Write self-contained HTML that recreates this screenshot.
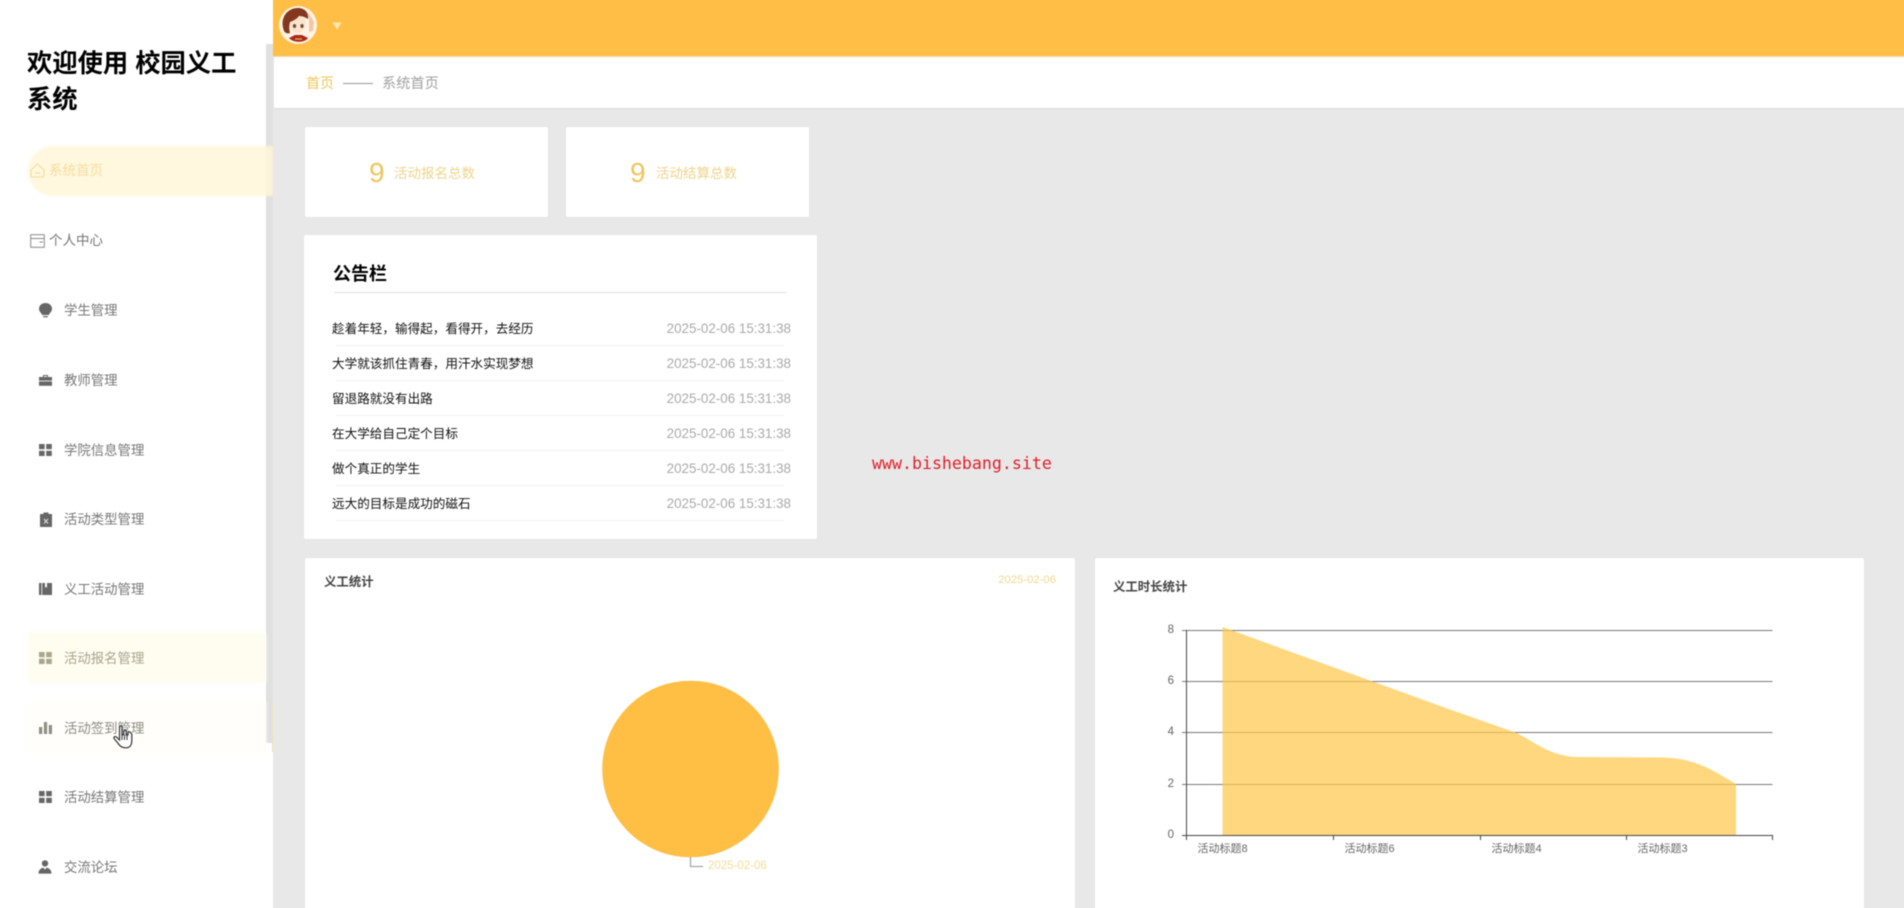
<!DOCTYPE html>
<html lang="zh-CN"><head><meta charset="utf-8"><title>校园义工系统</title>
<style>
html,body{margin:0;padding:0;width:1904px;height:908px;overflow:hidden;background:#e8e8e8}
body{font-family:"Liberation Sans","Noto Sans CJK SC",sans-serif;position:relative}
#w{position:absolute;left:-6px;top:-6px;width:1916px;height:920px;overflow:hidden;filter:blur(.4px);background:#e8e8e8}
#v{position:absolute;left:6px;top:6px;width:1904px;height:908px}
.a,.t,svg.i{position:absolute}
.t{white-space:nowrap;height:24px;line-height:24px}
.m{font-size:13.4px;color:#777;left:64px;margin-top:.5px}
.row{left:332px;font-size:12.6px;color:#111;margin-top:.5px}
.dt{left:665px;font-size:13.4px;color:#aaa;width:126px;text-align:right;margin-top:.5px}
.dv{position:absolute;left:336px;width:448px;height:1px;background:#f2f2f2}
.card{position:absolute;background:#fff;border-radius:2px;box-shadow:0 0 2px rgba(0,0,0,.03)}
</style></head><body><div id="w"><div id="v">

<!-- sidebar -->
<div class="a" style="left:-6px;top:-6px;width:279px;height:920px;background:#fff"></div>
<div class="a" style="left:266px;top:44px;width:6.5px;height:699px;background:#e0e0e0"></div>
<div class="a" style="left:28px;top:146px;width:245px;height:50px;background:rgba(255,246,216,.85);border-radius:25px 0 0 25px;filter:blur(1px)"></div>
<div class="a" style="left:28px;top:633px;width:238px;height:50px;background:#fffcf0;filter:blur(1.5px)"></div>
<div class="a" style="left:28px;top:702px;width:238px;height:50px;background:#fffefa;filter:blur(1.5px)"></div>
<div class="a" style="left:272px;top:703px;width:1px;height:49px;background:#efe2b5"></div>

<div class="t" style="left:27px;top:46px;height:37px;line-height:37px;font-size:25.3px;font-weight:700;color:#000">欢迎使用 校园义工</div>
<div class="t" style="left:27px;top:82px;height:37px;line-height:37px;font-size:25.3px;font-weight:700;color:#000">系统</div>

<svg class="i" style="left:30px;top:163px" width="15" height="15" viewBox="0 0 15 15" fill="none" stroke="#f5dc96" stroke-width="1.1"><path d="M1 7 L7.5 1 L14 7 V12.5 Q14 14 12.5 14 H2.5 Q1 14 1 12.5Z"/><path d="M5 10 H10"/></svg>
<div class="t" style="left:49px;top:159px;font-size:13.5px;color:#f5dd9c">系统首页</div>

<svg class="i" style="left:30px;top:234px" width="15" height="14" viewBox="0 0 15 14" fill="none" stroke="#8a8a8a" stroke-width="1"><rect x=".7" y=".7" width="13.6" height="12.6"/><path d="M.7 4.5 H14.3 M9.5 8 H13"/></svg>
<div class="t" style="left:49px;top:229px;font-size:13.5px;color:#777">个人中心</div>

<svg class="i" style="left:39px;top:303px" width="13" height="15" viewBox="0 0 13 15" fill="#666"><path d="M6.5 0 C10.5 0 13 2.6 13 6 C13 8.6 10.8 9.6 9.8 12 H3.2 C2.2 9.6 0 8.6 0 6 C0 2.6 2.5 0 6.5 0Z"/><rect x="4.2" y="13" width="4.6" height="1.3"/></svg>
<div class="t m" style="top:298px">学生管理</div>

<svg class="i" style="left:39px;top:374px" width="13" height="12" viewBox="0 0 13 12" fill="#666"><path d="M4 3 V1 H9 V3 H8 V2 H5 V3Z"/><rect x="0" y="3" width="13" height="3.6"/><rect x="0" y="7.4" width="13" height="4.4"/></svg>
<div class="t m" style="top:368px">教师管理</div>

<svg class="i" style="left:39px;top:444px" width="13" height="12" viewBox="0 0 13 12" fill="#666"><rect width="5.6" height="5.2"/><rect x="7.2" width="5.6" height="5.2"/><rect y="6.8" width="5.6" height="5.2"/><rect x="7.2" y="6.8" width="5.6" height="5.2"/></svg>
<div class="t m" style="top:438px">学院信息管理</div>

<svg class="i" style="left:40px;top:512px" width="12" height="15" viewBox="0 0 12 15"><path fill="#666" d="M0 2 H3.5 V0.5 H8.5 V2 H12 V15 H0Z"/><path d="M4 7 L8 11.5 M8 7 L4 11.5" stroke="#ddd" stroke-width="1.1"/></svg>
<div class="t m" style="top:507px">活动类型管理</div>

<svg class="i" style="left:39px;top:583px" width="13" height="12" viewBox="0 0 13 12" fill="#666"><rect width="2.4" height="12"/><path d="M3.2 0 H6 V5 L7 3.6 L8 5 V0 H13 V12 H3.2Z"/></svg>
<div class="t m" style="top:577px">义工活动管理</div>

<svg class="i" style="left:39px;top:652px" width="13" height="12" viewBox="0 0 13 12" fill="#a9a68d"><rect width="5.6" height="5.2"/><rect x="7.2" width="5.6" height="5.2"/><rect y="6.8" width="5.6" height="5.2"/><rect x="7.2" y="6.8" width="5.6" height="5.2"/></svg>
<div class="t m" style="top:646px;color:#a7a48c">活动报名管理</div>

<svg class="i" style="left:39px;top:722px" width="13" height="12" viewBox="0 0 13 12" fill="#8f8f85"><rect y="5" width="3.2" height="7"/><rect x="4.9" y="0" width="3.2" height="12"/><rect x="9.8" y="3" width="3.2" height="9"/></svg>
<div class="t m" style="top:716px;color:#8d8d85">活动签到管理</div>

<svg class="i" style="left:39px;top:791px" width="13" height="12" viewBox="0 0 13 12" fill="#666"><rect width="5.6" height="5.2"/><rect x="7.2" width="5.6" height="5.2"/><rect y="6.8" width="5.6" height="5.2"/><rect x="7.2" y="6.8" width="5.6" height="5.2"/></svg>
<div class="t m" style="top:785px">活动结算管理</div>

<svg class="i" style="left:38px;top:860px" width="14" height="14" viewBox="0 0 14 14" fill="#666"><circle cx="7" cy="3.4" r="3.2"/><path d="M0.5 13.6 C0.5 9.8 3 8 5.4 7.6 L7 9.6 L8.6 7.6 C11 8 13.5 9.8 13.5 13.6Z"/></svg>
<div class="t m" style="top:855px">交流论坛</div>

<svg class="i" style="left:113px;top:725px" width="20" height="24" viewBox="0 0 20 24"><path d="M6.5 2 C6.5 .5 9 .5 9 2 V10 L10.8 9.6 V6 C11.2 5 13 5 13.2 6 V10 L15 10 V7.5 C15.5 6.6 17 6.6 17.3 7.5 L18.8 9 V16 C18.8 19 17.5 22.8 13 22.8 C8.5 22.8 6.8 21 4.8 18 L1 13.5 C.5 12 2 11 3.4 12 L6.5 15Z" fill="#fff" stroke="#333" stroke-width="1.2"/><path d="M9 10 V15 M11.5 10 V15 M14 10 V15" stroke="#333" stroke-width="1"/></svg>

<!-- header -->
<div class="a" style="left:273px;top:-6px;width:1637px;height:62px;background:#ffbf47"></div>
<div class="a" style="left:273px;top:56px;width:1637px;height:1px;background:#f0d9ac"></div>
<svg class="i" style="left:278px;top:5px" width="40" height="40" viewBox="0 0 40 40">
<circle cx="20" cy="20" r="19" fill="#fff3e4"/>
<path d="M6 26 C1 12 10 3 20 3 C27 3 31 8 30 14 C27 12 24 11 21 11 C19 14 15 16 12 17 C11 21 11 24 12 28 C10 29 7 28 6 26Z" fill="#84371f"/>
<path d="M12 17 C15 16 19 14 21 11 C25 12 28 14 28 18 C28 24 24 28 19.5 28 C15 28 12 24 12 17Z" fill="#fbe3cc"/>
<ellipse cx="16.5" cy="21" rx="1.6" ry="2" fill="#6a4a32"/><ellipse cx="24" cy="21" rx="1.6" ry="2" fill="#6a4a32"/>
<path d="M30 7 L36 17 L35 26 L31 27 L31 15Z" fill="#f1c8a6"/>
<path d="M11 33 L17 30 H24 L30 33 C27 38 15 38 11 33Z" fill="#a82a1e"/>
<path d="M17 34 H24" stroke="#e8c050" stroke-width="1.2"/>
</svg>
<svg class="i" style="left:332px;top:22px" width="10" height="8" viewBox="0 0 10 8"><path d="M0.5 0.5 H9.5 L5 7.5Z" fill="#fde6b0"/></svg>

<!-- breadcrumb -->
<div class="a" style="left:274px;top:57px;width:1636px;height:51px;background:#fff;box-shadow:0 1px 1px rgba(0,0,0,.06)"></div>
<div class="t" style="left:306px;top:71px;font-size:14px;color:#f0c65c">首页</div>
<div class="a" style="left:343px;top:83px;width:30px;height:1.4px;background:#999"></div>
<div class="t" style="left:382px;top:71.5px;font-size:14.2px;color:#a0a0a0">系统首页</div>

<!-- stat cards -->
<div class="card" style="left:305px;top:127px;width:243px;height:90px"></div>
<div class="t" style="left:369px;top:153px;height:40px;line-height:40px;font-size:28px;color:#eec55e">9</div>
<div class="t" style="left:394px;top:161.5px;font-size:13.5px;color:#eed48c">活动报名总数</div>
<div class="card" style="left:566px;top:127px;width:243px;height:90px"></div>
<div class="t" style="left:630px;top:153px;height:40px;line-height:40px;font-size:28px;color:#eec55e">9</div>
<div class="t" style="left:656px;top:161.5px;font-size:13.5px;color:#eed48c">活动结算总数</div>

<!-- notices -->
<div class="card" style="left:304px;top:235px;width:513px;height:304px"></div>
<div class="t" style="left:333px;top:262px;font-size:18px;font-weight:700;color:#000">公告栏</div>
<div class="a" style="left:334px;top:292px;width:453px;height:1px;background:#e2e2e2"></div>
<div class="t row" style="top:316px">趁着年轻，输得起，看得开，去经历</div><div class="t dt" style="top:316px">2025-02-06 15:31:38</div>
<div class="dv" style="top:345px"></div>
<div class="t row" style="top:351px">大学就该抓住青春，用汗水实现梦想</div><div class="t dt" style="top:351px">2025-02-06 15:31:38</div>
<div class="dv" style="top:380px"></div>
<div class="t row" style="top:386px">留退路就没有出路</div><div class="t dt" style="top:386px">2025-02-06 15:31:38</div>
<div class="dv" style="top:415px"></div>
<div class="t row" style="top:421px">在大学给自己定个目标</div><div class="t dt" style="top:421px">2025-02-06 15:31:38</div>
<div class="dv" style="top:450px"></div>
<div class="t row" style="top:456px">做个真正的学生</div><div class="t dt" style="top:456px">2025-02-06 15:31:38</div>
<div class="dv" style="top:485px"></div>
<div class="t row" style="top:491px">远大的目标是成功的磁石</div><div class="t dt" style="top:491px">2025-02-06 15:31:38</div>
<div class="dv" style="top:520px"></div>

<!-- watermark -->
<div class="t" style="left:872px;top:452px;font-family:'DejaVu Sans Mono',monospace;font-size:16.6px;color:#e0202a">www.bishebang.site</div>

<!-- chart cards -->
<div class="card" style="left:305px;top:558px;width:770px;height:360px"></div>
<div class="t" style="left:324px;top:570px;font-size:12.4px;font-weight:700;color:#444">义工统计</div>
<div class="t" style="left:990px;top:568px;font-size:11.3px;color:#f0d98e;width:66px;text-align:right">2025-02-06</div>
<svg class="i" style="left:590px;top:670px" width="200" height="210" viewBox="590 670 200 210">
<circle cx="690.5" cy="769" r="88.3" fill="#ffbe44"/>
<path d="M690.5 857 V866.5 H703" fill="none" stroke="#a4a6ad" stroke-width="1.3"/>
</svg>
<div class="t" style="left:708px;top:854px;font-size:11.5px;color:#f3dc98">2025-02-06</div>

<div class="card" style="left:1095px;top:558px;width:769px;height:360px"></div>
<div class="t" style="left:1113px;top:575px;font-size:12.4px;font-weight:700;color:#444">义工时长统计</div>
<svg class="i" style="left:1170px;top:615px" width="620" height="235" viewBox="1170 615 620 235">
<g stroke="#777" stroke-width="1" fill="none">
<path d="M1182 630.5 H1772.5 M1182 681.5 H1772.5 M1182 732.5 H1772.5 M1182 784.5 H1772.5"/>
</g>
<path d="M1222.5 835 V627 L1443 707 L1516 732.7 C1535 742 1548 755 1575 757 L1662 757.5 C1695 758 1712 770 1736 784 V835Z" fill="#fec84e" fill-opacity=".72"/>
<g stroke="#444" stroke-width="1" fill="none">
<path d="M1186.5 630 V840 M1182 835.5 H1772.5 M1333.5 835 V840 M1480.5 835 V840 M1626.5 835 V840 M1772.5 835 V840"/>
</g>
</svg>
<div class="t" style="left:1162px;top:617.5px;font-size:11.5px;color:#666;width:12px;text-align:right">8</div>
<div class="t" style="left:1162px;top:668.5px;font-size:11.5px;color:#666;width:12px;text-align:right">6</div>
<div class="t" style="left:1162px;top:719.5px;font-size:11.5px;color:#666;width:12px;text-align:right">4</div>
<div class="t" style="left:1162px;top:771.5px;font-size:11.5px;color:#666;width:12px;text-align:right">2</div>
<div class="t" style="left:1162px;top:822.5px;font-size:11.5px;color:#666;width:12px;text-align:right">0</div>
<div class="t" style="left:1197.5px;top:837px;font-size:11px;color:#666">活动标题8</div>
<div class="t" style="left:1344.5px;top:837px;font-size:11px;color:#666">活动标题6</div>
<div class="t" style="left:1491.5px;top:837px;font-size:11px;color:#666">活动标题4</div>
<div class="t" style="left:1637.5px;top:837px;font-size:11px;color:#666">活动标题3</div>

</div></div></body></html>
